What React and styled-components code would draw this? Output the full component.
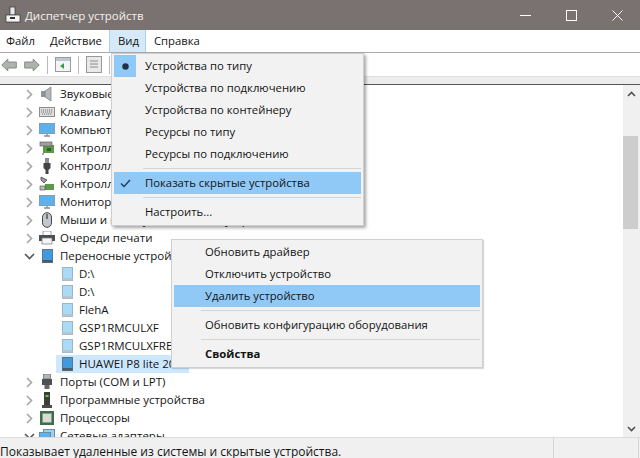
import styled, { createGlobalStyle } from "styled-components";

const Global = createGlobalStyle`
  html, body { margin: 0; padding: 0; background: #fff; }
  body { font-family: "Open Sans", "Noto Sans", sans-serif; font-size: 11.5px; color: #141414; }
`;

const Win = styled.div`
  width: 640px;
  height: 458px;
  position: relative;
  overflow: hidden;
  display: flex;
  flex-direction: column;
`;
const TitleBar = styled.div`
  height: 30px;
  flex: none;
  background: #7a7270;
  display: flex;
  align-items: center;
  padding-left: 5px;
  color: #f2f0ef;
  font-size: 11.5px;
`;
const TitleText = styled.div`
  margin-left: 4px;
  flex: 1;
`;
const WinBtn = styled.div`
  width: 46px;
  height: 30px;
  display: flex;
  align-items: center;
  justify-content: center;
`;
const MenuBar = styled.div`
  height: 22px;
  flex: none;
  background: #fff;
  border-bottom: 1px solid #aaa;
  display: flex;
  font-size: 11.3px;
`;
const MenuTitle = styled.div`
  height: 22px;
  padding: 0 ${(p) => p.$pad}px 0 ${(p) => p.$left}px;
  line-height: 21px;
  background: ${(p) => (p.$open ? "#d5e9f8" : "transparent")};
  border: 1px solid ${(p) => (p.$open ? "#a8d2f0" : "transparent")};
  border-top: none;
  border-bottom: none;
`;
const ToolBar = styled.div`
  height: 23px;
  flex: none;
  background: #fff;
  display: flex;
  align-items: center;
  padding-left: 1px;
  gap: 7px;
`;
const ToolSep = styled.div`
  width: 1px;
  height: 18px;
  background: #b9b9b9;
`;
const ArrowSvg = styled.svg`
  transform: ${(p) => (p.$flip ? "scaleX(-1)" : "none")};
`;
const Band = styled.div`
  height: 7px;
  flex: none;
  background: #ececec;
  border-top: 1px solid #e0e0e0;
  border-bottom: 1px solid #555;
`;
const Body = styled.div`
  flex: 1;
  min-height: 0;
  display: flex;
  background: #fff;
`;
const Tree = styled.div`
  flex: 1;
  min-width: 0;
  overflow: hidden;
`;
const Row = styled.div`
  height: 18px;
  display: flex;
  align-items: center;
  white-space: nowrap;
  padding-left: ${(p) => (p.$child ? 56 : 22)}px;
`;
const Chevron = styled.div`
  width: 14px;
  height: 18px;
  flex: none;
  display: flex;
  align-items: center;
  justify-content: center;
  margin-right: 3px;
`;
const RowIcon = styled.div`
  width: 16px;
  height: 16px;
  flex: none;
  display: flex;
  align-items: center;
  justify-content: center;
`;
const RowText = styled.div`
  margin-left: ${(p) => p.$m}px;
  padding: 0 2px 2px 0;
`;
const DeviceCell = styled.div`
  display: flex;
  align-items: center;
  height: 18px;
  width: 133px;
  background: ${(p) => (p.$on ? "#cce8ff" : "transparent")};
  padding-left: 3px;
  box-sizing: border-box;
`;
const ScrollBar = styled.div`
  width: 17px;
  flex: none;
  background: #f0f0f0;
  display: flex;
  flex-direction: column;
`;
const ScrollArrow = styled.div`
  height: 17px;
  flex: none;
  display: flex;
  align-items: center;
  justify-content: center;
`;
const ScrollGap = styled.div`
  height: 34px;
  flex: none;
`;
const Thumb = styled.div`
  width: 15px;
  height: 93px;
  flex: none;
  background: #cdcdcd;
`;
const Spacer = styled.div`
  flex: 1;
`;
const Status = styled.div`
  height: 21px;
  flex: none;
  background: #f0f0f0;
  border-top: 1px solid #dcdcdc;
  box-sizing: border-box;
  display: flex;
  font-size: 12px;
  line-height: 27px;
  overflow: hidden;
`;
const StatusCell = styled.div`
  width: ${(p) => p.$w}px;
  flex: none;
  border-right: 1px solid #d6d6d6;
  white-space: nowrap;
  overflow: hidden;
`;
const Popup = styled.div`
  position: absolute;
  left: ${(p) => p.$x}px;
  top: ${(p) => p.$y}px;
  width: ${(p) => p.$w}px;
  background: #f2f2f2;
  border: 1px solid #cfcfcf;
  box-sizing: border-box;
  padding: 1px 2px 2px;
  font-size: 11.3px;
  box-shadow: ${(p) => (p.$soft ? "1px 1px 1px rgba(0, 0, 0, 0.15)" : "2px 2px 3px rgba(0, 0, 0, 0.35)")};
`;
const Item = styled.div`
  height: 22px;
  display: flex;
  align-items: center;
  background: ${(p) => (p.$hot ? "#90c8f6" : "transparent")};
  font-weight: ${(p) => (p.$bold ? 700 : 400)};
  white-space: nowrap;
`;
const ItemLabel = styled.span`
  margin-left: ${(p) => p.$m}px;
  padding-bottom: 2px;
`;
const Gutter = styled.div`
  width: ${(p) => p.$w}px;
  height: 22px;
  flex: none;
  display: flex;
  align-items: center;
  justify-content: center;
  background: ${(p) => (p.$on ? "#90c8f6" : "transparent")};
`;
const Sep = styled.div`
  height: 1px;
  background: #d4d4d4;
  margin: 3px 0 3px ${(p) => p.$left}px;
`;

const Right = () => (
  <svg width="7" height="11" viewBox="0 0 7 11"><path d="M1 1l4.5 4.5L1 10" fill="none" stroke="#a6a6a6" strokeWidth="1.6" /></svg>
);
const Down = () => (
  <svg width="11" height="7" viewBox="0 0 11 7"><path d="M1 1l4.5 4.5L10 1" fill="none" stroke="#555" strokeWidth="1.6" /></svg>
);
const Arrow = ({ flip }) => (
  <ArrowSvg $flip={flip} width="16" height="14" viewBox="0 0 16 14">
    <path d="M.8 7l6-6v3h8.5v6H6.8v3z" fill="#aeb3ae" stroke="#868a86" />
  </ArrowSvg>
);

const icons = {
  sound: <svg width="14" height="16" viewBox="0 0 14 16"><path d="M1 5h4v6H1z" fill="#8f9498" /><path d="M5 5l6-4v14l-6-4z" fill="#b4b8bb" stroke="#74797d" strokeWidth=".7" /></svg>,
  keyboard: <svg width="16" height="10" viewBox="0 0 16 10"><rect x=".5" y=".5" width="15" height="9" fill="#e0e0e0" stroke="#8c8c8c" /><path d="M2 3h12M2 5h12M3 7h10" stroke="#777" strokeDasharray="1.2 .8" /></svg>,
  monitor: <svg width="16" height="14" viewBox="0 0 16 14"><rect x=".5" y=".5" width="15" height="10" fill="#5db2ec" stroke="#7f9db4" /><path d="M5 13h6M8 11v2" stroke="#8d8d8d" strokeWidth="1.4" /></svg>,
  card: <svg width="16" height="14" viewBox="0 0 16 14"><rect x="4" y="4" width="11" height="8" fill="#5c9a48" /><rect x="1" y="1" width="12" height="4" fill="#a0a0a0" stroke="#555" strokeWidth=".6" /><rect x="8" y="7" width="4" height="3" fill="#2f5f2a" /><path d="M4 12v2" stroke="#555" /></svg>,
  usb: <svg width="10" height="16" viewBox="0 0 10 16"><rect x="3" y="0" width="4" height="5" fill="#8a8a8a" /><path d="M1.5 5h7v5l-2 2v4h-3v-4l-2-2z" fill="#444" /></svg>,
  storage: <svg width="16" height="16" viewBox="0 0 16 16"><path d="M2 1l6 3-3 3-3-3z" fill="#9c9c9c" stroke="#333" strokeWidth=".7" /><rect x="6" y="8" width="9" height="6" fill="#5c9a48" /><path d="M1 10h5v4H1z" fill="#bdbdbd" stroke="#444" strokeWidth=".6" /></svg>,
  mouse: <svg width="12" height="16" viewBox="0 0 12 16"><rect x="1.5" y=".7" width="9" height="14.6" rx="4.5" fill="#c4c8cc" stroke="#3f4347" /><path d="M6 2v5" stroke="#4d4d4d" strokeWidth="1.4" /></svg>,
  printer: <svg width="16" height="14" viewBox="0 0 16 14"><rect x="4" y="0" width="8" height="5" fill="#fff" stroke="#777" strokeWidth=".7" /><rect x="0" y="4" width="16" height="6" fill="#4a4f54" /><rect x="3" y="7" width="10" height="6" fill="#f4f4f4" stroke="#777" strokeWidth=".7" /></svg>,
  port: <svg width="12" height="16" viewBox="0 0 12 16"><rect x="2.5" y="0" width="7" height="5" fill="#b5b5b5" stroke="#555" strokeWidth=".6" /><rect x="1" y="5" width="10" height="6" fill="#4d5054" /><rect x="3.5" y="11" width="5" height="4" fill="#666" /></svg>,
  soft: <svg width="10" height="16" viewBox="0 0 10 16"><rect x="2" y="0" width="6" height="13" fill="#3a4038" /><rect x="3.5" y="3" width="3" height="2" fill="#6fbf5f" /><rect x="0" y="13" width="10" height="3" fill="#4a4a4a" /></svg>,
  cpu: <svg width="16" height="16" viewBox="0 0 16 16"><rect x="1" y="1" width="14" height="14" fill="#3f6f4a" /><rect x="3.5" y="3.5" width="9" height="9" fill="#d8dcd2" stroke="#8a8f85" strokeWidth=".5" /></svg>,
  net: <svg width="16" height="15" viewBox="0 0 16 15"><rect x="4.5" y=".5" width="11" height="8" fill="#9ccff0" stroke="#6a8ea8" /><rect x=".5" y="3.5" width="11" height="8" fill="#5db2ec" stroke="#6a8ea8" /></svg>,
  phone: <svg width="11" height="14" viewBox="0 0 11 14"><rect x=".5" y=".5" width="10" height="13" fill="#3f9ae0" stroke="#5f7788" /><rect x=".5" y="11" width="10" height="2.5" fill="#4a5a66" /></svg>,
  drive: <svg width="11" height="14" viewBox="0 0 11 14"><rect x=".5" y=".5" width="10" height="13" fill="#a9dbf7" stroke="#9fb3c0" /><rect x=".5" y="11" width="10" height="2.5" fill="#b9c5cc" /></svg>,
};

const top = [
  ["sound", "Звуковые, видео и игровые устройства"],
  ["keyboard", "Клавиатуры"],
  ["monitor", "Компьютер"],
  ["card", "Контроллеры IDE ATA/ATAPI"],
  ["usb", "Контроллеры USB"],
  ["storage", "Контроллеры запоминающих устройств"],
  ["monitor", "Мониторы"],
  ["mouse", "Мыши и иные указывающие устройства"],
  ["printer", "Очереди печати"],
];
const drives = ["D:\\", "D:\\", "FlehA", "GSP1RMCULXF", "GSP1RMCULXFRE"];
const rest = [
  ["port", "Порты (COM и LPT)"],
  ["soft", "Программные устройства"],
  ["cpu", "Процессоры"],
];

const TreeRow = ({ icon, text, open }) => (
  <Row>
    <Chevron>{open ? <Down /> : <Right />}</Chevron>
    <RowIcon>{icons[icon]}</RowIcon>
    <RowText $m={5}>{text}</RowText>
  </Row>
);

export default function App() {
  return (
    <Win>
      <Global />
      <TitleBar>
        <svg width="16" height="18" viewBox="0 0 16 18"><rect x="5" y="1" width="5" height="8" fill="#e8e8e8" stroke="#333" strokeWidth=".7" /><rect x="1" y="9" width="14" height="7" fill="#f4f4f4" stroke="#333" strokeWidth=".7" /><rect x="5" y="11" width="5" height="2" fill="#333" /></svg>
        <TitleText>Диспетчер устройств</TitleText>
        <WinBtn><svg width="11" height="11" viewBox="0 0 11 11"><path d="M0 5.5h11" stroke="#fff" /></svg></WinBtn>
        <WinBtn><svg width="11" height="11" viewBox="0 0 11 11"><rect x=".5" y=".5" width="10" height="10" fill="none" stroke="#fff" /></svg></WinBtn>
        <WinBtn><svg width="11" height="11" viewBox="0 0 11 11"><path d="M.5.5l10 10M10.5.5l-10 10" stroke="#fff" /></svg></WinBtn>
      </TitleBar>
      <MenuBar>
        <MenuTitle $left={5} $pad={5}>Файл</MenuTitle>
        <MenuTitle $left={8} $pad={6}>Действие</MenuTitle>
        <MenuTitle $open $left={8} $pad={6}>Вид</MenuTitle>
        <MenuTitle $left={7} $pad={8}>Справка</MenuTitle>
      </MenuBar>
      <ToolBar>
        <Arrow />
        <Arrow flip />
        <ToolSep />
        <svg width="16" height="15" viewBox="0 0 16 15"><rect x=".5" y=".5" width="15" height="14" fill="#f4f4f4" stroke="#9a9a9a" /><rect x="1" y="1" width="14" height="3" fill="#bfc6cc" /><path d="M9 6v6l-4-3z" fill="#3f9a50" /></svg>
        <ToolSep />
        <svg width="16" height="17" viewBox="0 0 16 17"><rect x=".5" y=".5" width="15" height="16" fill="#e9e9e9" stroke="#999" /><path d="M4 5h8M4 8h8M4 11h8" stroke="#8a8a8a" /></svg>
        <ToolSep />
      </ToolBar>
      <Band />
      <Body>
        <Tree>
          {top.map(([icon, text], i) => <TreeRow key={i} icon={icon} text={text} />)}
          <TreeRow icon="phone" text="Переносные устройства" open />
          {drives.map((d, i) => (
            <Row key={i} $child>
              <DeviceCell>
                <RowIcon>{icons.drive}</RowIcon>
                <RowText $m={4}>{d}</RowText>
              </DeviceCell>
            </Row>
          ))}
          <Row $child>
            <DeviceCell $on>
              <RowIcon>{icons.phone}</RowIcon>
              <RowText $m={4}>HUAWEI P8 lite 2017</RowText>
            </DeviceCell>
          </Row>
          {rest.map(([icon, text], i) => <TreeRow key={i} icon={icon} text={text} />)}
          <TreeRow icon="net" text="Сетевые адаптеры" open />
        </Tree>
        <ScrollBar>
          <ScrollArrow><svg width="9" height="6" viewBox="0 0 9 6"><path d="M1 5l3.5-3.5L8 5" fill="none" stroke="#505050" strokeWidth="1.6" /></svg></ScrollArrow>
          <ScrollGap />
          <Thumb />
          <Spacer />
          <ScrollArrow><svg width="9" height="6" viewBox="0 0 9 6"><path d="M1 1l3.5 3.5L8 1" fill="none" stroke="#505050" strokeWidth="1.6" /></svg></ScrollArrow>
        </ScrollBar>
      </Body>
      <Status>
        <StatusCell $w={553}>Показывает удаленные из системы и скрытые устройства.</StatusCell>
        <StatusCell $w={84} />
      </Status>

      <Popup $x={111} $y={53} $w={253}>
        <Item><Gutter $w={22} $on><svg width="7" height="7" viewBox="0 0 7 7"><circle cx="3.5" cy="3.5" r="3.2" fill="#1f3348" /></svg></Gutter><ItemLabel $m={9}>Устройства по типу</ItemLabel></Item>
        <Item><Gutter $w={22} /><ItemLabel $m={9}>Устройства по подключению</ItemLabel></Item>
        <Item><Gutter $w={22} /><ItemLabel $m={9}>Устройства по контейнеру</ItemLabel></Item>
        <Item><Gutter $w={22} /><ItemLabel $m={9}>Ресурсы по типу</ItemLabel></Item>
        <Item><Gutter $w={22} /><ItemLabel $m={9}>Ресурсы по подключению</ItemLabel></Item>
        <Sep $left={29} />
        <Item $hot><Gutter $w={22}><svg width="11" height="9" viewBox="0 0 11 9"><path d="M1 4.5l3 3L10 1" fill="none" stroke="#1f3f66" strokeWidth="1.5" /></svg></Gutter><ItemLabel $m={9}>Показать скрытые устройства</ItemLabel></Item>
        <Sep $left={29} />
        <Item><Gutter $w={22} /><ItemLabel $m={9}>Настроить...</ItemLabel></Item>
      </Popup>

      <Popup $soft $x={171} $y={239} $w={312}>
        <Item><ItemLabel $m={31}>Обновить драйвер</ItemLabel></Item>
        <Item><ItemLabel $m={31}>Отключить устройство</ItemLabel></Item>
        <Item $hot><ItemLabel $m={31}>Удалить устройство</ItemLabel></Item>
        <Sep $left={27} />
        <Item><ItemLabel $m={31}>Обновить конфигурацию оборудования</ItemLabel></Item>
        <Sep $left={27} />
        <Item $bold><ItemLabel $m={31}>Свойства</ItemLabel></Item>
      </Popup>
    </Win>
  );
}
